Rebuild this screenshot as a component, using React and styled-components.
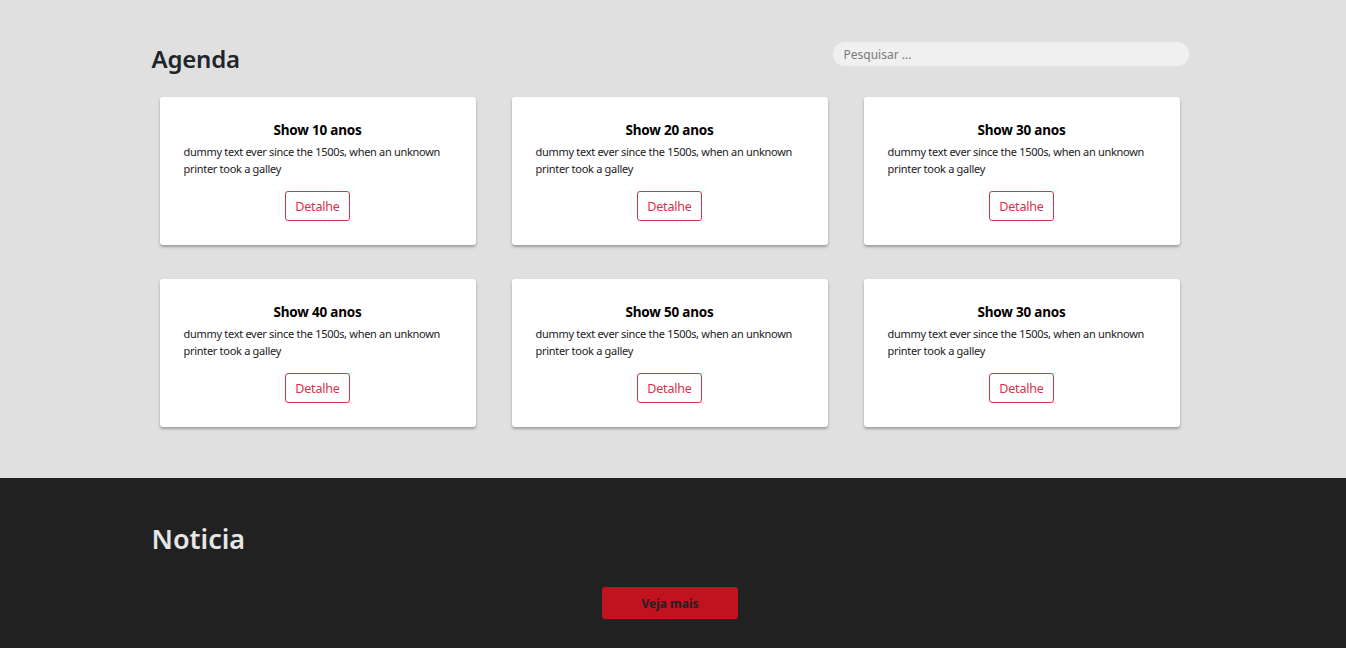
import React from 'react'
import styled, { createGlobalStyle } from 'styled-components'

const GlobalStyle = createGlobalStyle`
  body {
    margin: 0;
    font-family: "Noto Sans", "Open Sans", sans-serif;
    background: #212121;
  }
  * { box-sizing: border-box; }
`

const shows = [
  { id: 1, title: 'Show 10 anos' },
  { id: 2, title: 'Show 20 anos' },
  { id: 3, title: 'Show 30 anos' },
  { id: 4, title: 'Show 40 anos' },
  { id: 5, title: 'Show 50 anos' },
  { id: 6, title: 'Show 30 anos' },
]

function App() {
  return (
    <>
      <GlobalStyle />
      <AgendaSection>
        <Container>
          <HeaderRow>
            <SectionTitle>Agenda</SectionTitle>
            <SearchInput type='text' placeholder='Pesquisar ...' />
          </HeaderRow>
          <CardsGrid>
            {shows.map(show => (
              <Card key={show.id}>
                <CardTitle>{show.title}</CardTitle>
                <CardText>dummy text ever since the 1500s, when an unknown printer took a galley</CardText>
                <DetailButton>Detalhe</DetailButton>
              </Card>
            ))}
          </CardsGrid>
        </Container>
      </AgendaSection>
      <NewsSection>
        <Container>
          <SectionTitle $light>Noticia</SectionTitle>
          <ButtonRow>
            <MoreButton>Veja mais</MoreButton>
          </ButtonRow>
        </Container>
      </NewsSection>
    </>
  )
}

export default App

const AgendaSection = styled.section`
    background-color: #e0e0e0;
    padding: 42px 0 51px;
`

const NewsSection = styled.section`
    background-color: #212121;
    padding: 44px 0 30px;
`

const Container = styled.div`
    width: 1037px;
    margin: 0 auto;
    position: relative;
    left: -3px;
`

const HeaderRow = styled.div`
    display: flex;
    justify-content: space-between;
    align-items: flex-start;
`

const SectionTitle = styled.h2`
    margin: 0;
    font-size: ${props => props.$light ? '27px' : '24px'};
    font-weight: 600;
    line-height: 34px;
    letter-spacing: ${props => props.$light ? '0' : '-0.2px'};
    color: ${props => props.$light ? '#e6e6e6' : '#212529'};
`

const SearchInput = styled.input`
    width: 356px;
    height: 24px;
    border: none;
    border-radius: 12px;
    background-color: #f0f0f0;
    padding: 0 11px;
    font-family: inherit;
    font-size: 12px;
    color: #555;
    outline: none;

    &::placeholder {
        color: #7a7a7a;
    }
`

const CardsGrid = styled.div`
    display: grid;
    grid-template-columns: repeat(3, 316px);
    column-gap: 36px;
    row-gap: 34px;
    padding-left: 8px;
    margin-top: 21px;
`

const Card = styled.div`
    background-color: #fff;
    border-radius: 3px;
    height: 148px;
    padding: 24px 24px 0;
    box-shadow: 0 2px 3px rgba(0, 0, 0, 0.3);
    display: flex;
    flex-direction: column;
    align-items: center;
`

const CardTitle = styled.h3`
    margin: 0;
    font-size: 13.5px;
    font-weight: 700;
    line-height: 18px;
    letter-spacing: -0.2px;
    color: #000;
`

const CardText = styled.p`
    margin: 4px 0 0;
    font-size: 11px;
    line-height: 17px;
    letter-spacing: -0.3px;
    color: #1a1a1a;
    align-self: stretch;
`

const DetailButton = styled.button`
    margin-top: 14px;
    width: 65px;
    height: 30px;
    background: #fff;
    border: 1px solid #d9324a;
    border-radius: 3px;
    color: #d9324a;
    font-family: inherit;
    font-size: 12.5px;
    letter-spacing: -0.2px;
    cursor: pointer;
`

const ButtonRow = styled.div`
    display: flex;
    justify-content: center;
    margin-top: 31px;
`

const MoreButton = styled.button`
    width: 136px;
    height: 32px;
    border: none;
    border-radius: 3px;
    background-color: #c1121f;
    color: #212121;
    font-family: inherit;
    font-size: 12px;
    font-weight: 700;
    cursor: pointer;
`
